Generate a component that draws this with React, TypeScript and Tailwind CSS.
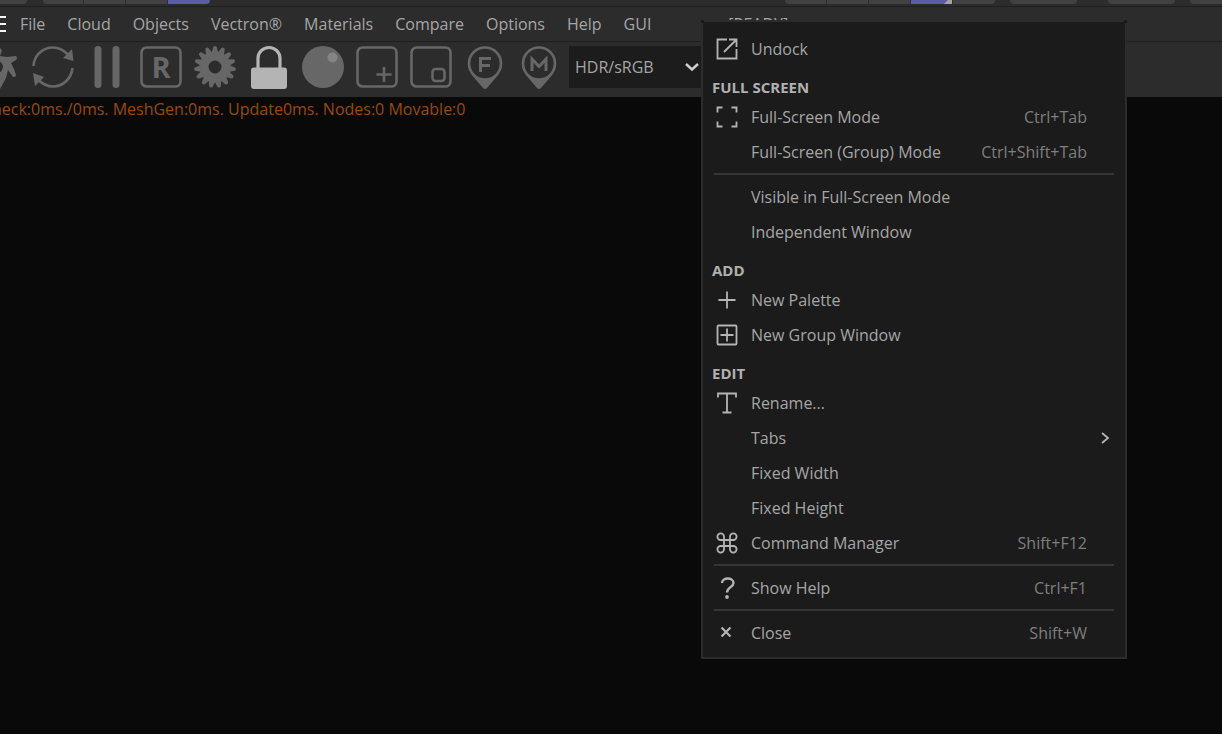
import { ReactNode } from "react";

const topLevel = ["File", "Cloud", "Objects", "Vectron®", "Materials", "Compare", "Options", "Help", "GUI"];

// gear teeth, as rotation angles
const teeth = Array.from({ length: 15 }, (_, i) => i * 24);

const ToolButton = ({ label, children }: { label: string; children: ReactNode }) => (
  <button aria-label={label} className="h-11 w-11 shrink-0 text-[#676767]">
    <svg viewBox="0 0 44 44" className="h-11 w-11" fill="none" stroke="currentColor" strokeWidth="2.6">
      {children}
    </svg>
  </button>
);

const Toolbar = () => (
  <div className="flex h-[55px] items-center overflow-hidden bg-[#2c2c2c] pb-[5px]">
    <div className="-ml-[23px] flex shrink-0 gap-[10px]">
      <ToolButton label="Send scene">
        <path fill="currentColor" stroke="none" d="M22 1l3 5-2 5 7 1 9-1q2 2 0 4l-5 3 3 6 2 6q0 2-3 2l-5-7-2 8-6 11h-3V28a6 6 0 0 0 0-12z" />
      </ToolButton>
      <ToolButton label="Restart">
        <path d="M2.500 21C3 11 11 2.500 22 2.500c6 0 11 3 15 7M41.500 23c-1 10-9 18.500-19.500 18.500-6 0-11-3-15-7" />
        <path fill="currentColor" stroke="none" d="M32 13l9-9 1.500 12zM2 28l11 4-9 9z" />
      </ToolButton>
      <ToolButton label="Pause">
        <path d="M13 4.500v35M31 4.500v35" strokeWidth="7" strokeLinecap="round" />
      </ToolButton>
      <ToolButton label="Reset">
        <rect x="2.5" y="2.5" width="39" height="39" rx="5" />
        <text x="22" y="33" textAnchor="middle" fontSize="29" fontWeight="700" fill="currentColor" stroke="none" className="font-['Open_Sans',sans-serif]">R</text>
      </ToolButton>
      <ToolButton label="Settings">
        <circle cx="22" cy="22" r="11" strokeWidth="9" />
        {teeth.map((a) => (
          <path key={a} transform={`rotate(${a} 22 22)`} fill="currentColor" stroke="none" d="M18.700 8l1.400-5.500q.3-1.500 1.900-1.500t1.900 1.500L25.300 8z" />
        ))}
      </ToolButton>
      <ToolButton label="Lock resolution">
        <g className="text-[#b4b4b4]">
          <path stroke="currentColor" strokeWidth="3.2" d="M11 24V13.500a11 11 0 0 1 22 0V24" />
          <rect x="4" y="22.500" width="36" height="21.500" rx="3" fill="currentColor" stroke="none" />
        </g>
      </ToolButton>
      <ToolButton label="Clay mode">
        <circle cx="22" cy="22" r="21" fill="currentColor" stroke="none" />
        <circle cx="31.500" cy="12.500" r="5" fill="#858585" stroke="none" />
      </ToolButton>
      <ToolButton label="Add region">
        <rect x="2.500" y="2.500" width="39" height="39" rx="5" />
        <path d="M29 22v15M21.500 29.500h15" />
      </ToolButton>
      <ToolButton label="Render region">
        <rect x="2.500" y="2.500" width="39" height="39" rx="5" />
        <rect x="23.500" y="24" width="12" height="12" rx="3" />
      </ToolButton>
      <ToolButton label="Focus picker">
        <circle cx="22" cy="18.500" r="16" />
        <path fill="currentColor" stroke="none" d="M8 29q14 10 28 0L24 43q-2 2-4 0z" />
        <path d="M17.500 27V13.500H28M17.500 20.500H27" strokeWidth="3" />
      </ToolButton>
      <ToolButton label="Material picker">
        <circle cx="22" cy="18.500" r="16" />
        <path fill="currentColor" stroke="none" d="M8 29q14 10 28 0L24 43q-2 2-4 0z" />
        <path d="M15 26V14l7 7.500 7-7.500v12" strokeWidth="3" />
      </ToolButton>
    </div>
    <div className="relative ml-2 shrink-0">
      <select aria-label="Colour space" className="block h-[42px] w-[136px] appearance-none bg-[#1c1c1c] pl-[6px] text-[#a6a6a6]">
        <option>HDR/sRGB</option>
      </select>
      <svg viewBox="0 0 14 8" className="pointer-events-none absolute top-[17px] left-[116px] h-2 w-[14px]" fill="none" stroke="#cfcfcf" strokeWidth="2.500">
        <path d="M1 1l6 5.500L13 1" />
      </svg>
    </div>
  </div>
);

const TabStrip = () => (
  <div className="flex h-[7px] items-start border-b border-[#1e1e1e] bg-[#2c2c2c]">
    <div className="h-1 w-[27px] shrink-0 rounded-br bg-[#414141]" />
    <div className="ml-4 flex h-1 shrink-0 gap-px overflow-hidden rounded-b bg-[#2f2f2f]">
      <div className="w-10 bg-[#414141]" />
      <div className="w-[41px] bg-[#414141]" />
      <div className="w-[41px] bg-[#414141]" />
      <div className="w-[42px] bg-[#5a5ca5]" />
    </div>
    <div className="ml-[575px] flex h-1 shrink-0 gap-px overflow-hidden rounded-b bg-[#2f2f2f]">
      <div className="w-[41px] bg-[#414141]" />
      <div className="w-[41px] bg-[#414141]" />
      <div className="w-[41px] bg-[#414141]" />
      <div className="flex w-[41px] justify-end bg-[#5a5ca5]">
        <svg viewBox="0 0 8 4" className="h-1 w-2" fill="#a5a5a5">
          <path d="M0 4l4-4h4v4z" />
        </svg>
      </div>
      <div className="w-[42px] bg-[#414141]" />
    </div>
    <div className="ml-[15px] h-1 w-[67px] shrink-0 rounded-b bg-[#414141]" />
    <div className="ml-[31px] h-1 w-[67px] shrink-0 rounded-b bg-[#414141]" />
    <div className="ml-[15px] h-1 grow rounded-bl bg-[#414141]" />
  </div>
);

const MenuBar = () => (
  <div className="flex h-[35px] items-center overflow-hidden border-b border-[#1e1e1e] bg-[#2c2c2c] whitespace-nowrap">
    <button aria-label="Menu" className="mr-[14px] flex w-[6px] flex-col gap-[5px]">
      <span className="h-[2px] w-full bg-[#f5f5f5]" />
      <span className="h-[2px] w-full bg-[#f5f5f5]" />
      <span className="h-[2px] w-full bg-[#f5f5f5]" />
    </button>
    <nav className="flex gap-[22px]">
      {topLevel.map((name) => (
        <button key={name}>{name}</button>
      ))}
    </nav>
    <span className="ml-[77px]">[READY]</span>
  </div>
);

const MenuItem = ({ label, keys, icon, submenu }: { label: string; keys?: string; icon?: ReactNode; submenu?: boolean }) => (
  <button role="menuitem" className="flex h-[35px] w-full items-center pr-[11px] pl-[13px] text-left">
    <svg viewBox="0 0 22 22" className="mr-[13px] h-[22px] w-[22px] shrink-0" fill="none" stroke="#b4b4b4" strokeWidth="1.800">
      {icon}
    </svg>
    <span className="grow">{label}</span>
    {keys && <span className="mr-[27px] text-[#7f7f7f]">{keys}</span>}
    {submenu && (
      <svg viewBox="0 0 10 12" className="mr-1 h-3 w-[10px]" fill="none" stroke="#b4b4b4" strokeWidth="1.800">
        <path d="M2 1l6 5-6 5" />
      </svg>
    )}
  </button>
);

const Heading = ({ children }: { children: ReactNode }) => (
  <h2 className="flex h-[33px] items-center pt-[10px] pl-[9px] text-[15px] font-bold text-[#b0b0b0]">{children}</h2>
);

const Separator = () => <hr className="mx-[11px] my-1 border-t-2 border-[#363636]" />;

const ContextMenu = () => (
  <div role="menu" className="absolute top-5 left-[701px] w-[426px] border-2 border-[#2c2c2c] bg-[#1b1b1b] pt-[9px] pb-[7px]">
    {/* notched corners */}
    <span className="absolute -top-[2px] -left-[2px] h-[3px] w-[3px] bg-[#1b1b1b]" />
    <span className="absolute -top-[2px] -right-[2px] h-[3px] w-[3px] bg-[#1b1b1b]" />
    <MenuItem label="Undock" icon={<path d="M11 1.500H1.500v19h19V11M8 14L20 2M13 1.500h7.500V9" />} />
    <Heading>FULL SCREEN</Heading>
    <MenuItem label="Full-Screen Mode" keys="Ctrl+Tab" icon={<path d="M1.500 6.500v-5h5M15.500 1.500h5v5M20.500 15.500v5h-5M6.500 20.500h-5v-5" />} />
    <MenuItem label="Full-Screen (Group) Mode" keys="Ctrl+Shift+Tab" />
    <Separator />
    <MenuItem label="Visible in Full-Screen Mode" />
    <MenuItem label="Independent Window" />
    <Heading>ADD</Heading>
    <MenuItem label="New Palette" icon={<path d="M11 2.500v17M2.500 11h17" />} />
    <MenuItem label="New Group Window" icon={<><rect x="1.500" y="1.500" width="19" height="19" rx="1" /><path d="M11 4.500v13M4.500 11h13" /></>} />
    <Heading>EDIT</Heading>
    <MenuItem label="Rename..." icon={<path d="M2 5.500v-4h18v4M11 1.500v19M6.500 20.500h9" />} />
    <MenuItem label="Tabs" submenu />
    <MenuItem label="Fixed Width" />
    <MenuItem label="Fixed Height" />
    <MenuItem
      label="Command Manager"
      keys="Shift+F12"
      icon={<path d="M8 8V4.700A3.300 3.300 0 1 0 4.700 8h12.600A3.300 3.300 0 1 0 14 4.700v12.600a3.300 3.300 0 1 0 3.300-3.300H4.700A3.300 3.300 0 1 0 8 17.300z" />}
    />
    <Separator />
    <MenuItem
      label="Show Help"
      keys="Ctrl+F1"
      icon={<><path d="M6 6c0-6 11.500-6 11.500 0 0 4-6.500 4.500-6.500 9.500" strokeWidth="2.400" /><circle cx="11" cy="20" r="1.900" fill="#b4b4b4" stroke="none" /></>}
    />
    <Separator />
    <MenuItem label="Close" keys="Shift+W" icon={<path d="M5.500 5.500l9 9M14.500 5.500l-9 9" strokeWidth="2.200" />} />
  </div>
);

const App = () => {
  return (
    <div className="relative min-h-screen overflow-hidden bg-[#090909] font-['Open_Sans',sans-serif] text-base text-[#a6a6a6]">
      <TabStrip />
      <MenuBar />
      <Toolbar />
      <p className="-ml-2 leading-6 whitespace-nowrap text-[#984a0a]">heck:0ms./0ms. MeshGen:0ms. Update0ms. Nodes:0 Movable:0</p>
      <ContextMenu />
    </div>
  );
};

export default App;
